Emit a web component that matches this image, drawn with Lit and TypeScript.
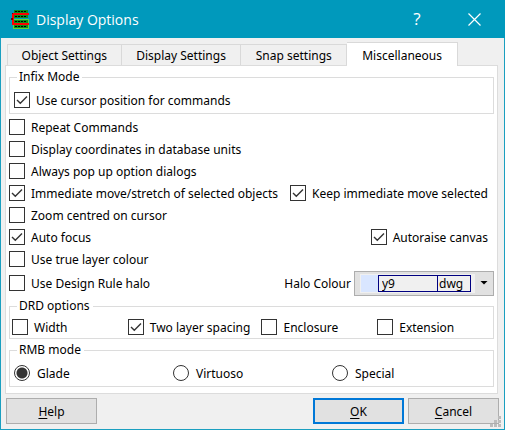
import { LitElement, html, css, svg } from "lit";
import { customElement, property, state } from "lit/decorators.js";
import { classMap } from "lit/directives/class-map.js";

const TABS = ["Object Settings", "Display Settings", "Snap settings", "Miscellaneous"];

const dots = (y: number) =>
  [4, 7, 10, 13].map((x) => svg`<rect x=${x} y=${y} width="2" height="1" fill="#000"/>`);

@customElement("check-option")
export class CheckOption extends LitElement {
  @property() label = "";
  @property({ type: Boolean }) checked = false;

  static styles = css`
    :host { display: block; }
    .option { display: flex; align-items: center; gap: 6px; height: 16px; white-space: nowrap; }
    .text { padding-top: 2px; }
    .box {
      appearance: none; flex: none; width: 16px; height: 16px; margin: 0;
      border: 1px solid #333; background: #fff;
    }
    .box:checked {
      background: #fff url("data:image/svg+xml,%3Csvg xmlns='http://www.w3.org/2000/svg' viewBox='0 0 14 14'%3E%3Cpath d='M2 7 L5.3 10.3 L12 3.6' fill='none' stroke='%23333' stroke-width='1.4'/%3E%3C/svg%3E") center / 14px 14px no-repeat;
    }
  `;

  render() {
    return html`<label class="option">
      <input class="box" type="checkbox" .checked=${this.checked} />
      <span class="text">${this.label}</span>
    </label>`;
  }
}

@customElement("app-root")
export class AppRoot extends LitElement {
  @state() private tab = 3;

  static styles = css`
    :host {
      display: block;
      font: 12px/16px "Noto Sans", sans-serif;
      color: #000;
    }
    * { box-sizing: border-box; }
    .window { background: #f0f0f0; border: 1px solid #1a9fc0; border-top: 0; }
    .titlebar {
      display: flex; align-items: center; height: 38px; padding: 0 18px 0 11px;
      margin: 0 -1px; background: #0099bc; color: #fff;
    }
    .logo { flex: none; width: 20px; height: 20px; }
    .title { flex: 1; margin: 0 0 0 5px; padding-top: 2px; font: 14px/24px "Open Sans", "Noto Sans", sans-serif; }
    .caption {
      width: 26px; height: 26px; margin-left: 31px; padding: 0; border: 0;
      background: none; color: #fff; font: 17px/24px "Open Sans", sans-serif;
      display: grid; place-items: center;
    }
    .tabs { display: flex; align-items: flex-end; height: 23px; margin-top: 4px; padding: 0 46px 0 6px; }
    .tab {
      flex: 114 1 0; height: 21px; padding: 2px 0 0; border: 1px solid #d9d9d9; border-width: 1px 1px 0 0;
      background: #f0f0f0; font: inherit; color: inherit; white-space: nowrap;
    }
    .tab:nth-child(1) { border-left-width: 1px; }
    .tab:nth-child(2) { flex-grow: 120; }
    .tab:nth-child(3) { flex-grow: 106; }
    .tab:nth-child(4) { flex-grow: 111; }
    .tab.active { height: 24px; margin-bottom: -1px; background: #fff; z-index: 1; }
    .panel { margin: 0 6px 0 4px; padding: 4px 3px 6px; background: #fff; border: 1px solid #dcdcdc; }
    .group { min-width: 0; margin: 0; border: 1px solid #dcdcdc; padding: 8px 4px 5px; }
    .legend { margin-left: 3px; padding: 0 3px 0 2px; line-height: 14px; }
    .rows { margin: 2px 0 3px; padding-right: 6px; }
    .row { display: flex; align-items: center; justify-content: space-between; height: 22px; }
    .row.tall { height: 26px; margin-right: -6px; }
    .drd { margin-bottom: 4px; padding: 6px 2px 3px; }
    .drd .legend { margin-left: 5px; }
    .drd-grid { display: grid; grid-template-columns: 116fr 134fr 116fr 114fr; }
    .drd-grid > * { min-width: 0; }
    .modes { display: grid; grid-template-columns: 159fr 159fr 157fr; }
    .mode { display: flex; align-items: center; gap: 7px; height: 16px; }
    .text { padding-top: 2px; }
    .radio {
      appearance: none; width: 16px; height: 16px; margin: 0;
      border: 1px solid #333; border-radius: 50%; background: #fff;
    }
    .radio:checked { background: radial-gradient(circle, #333 5px, #fff 6px); }
    .halo { display: flex; align-items: center; gap: 3px; }
    .combo {
      position: relative; display: flex; width: 140px; height: 25px;
      padding: 2px 5px; border: 1px solid #adadad; background: #e1e1e1;
    }
    .layer { display: flex; width: 115px; height: 19px; padding: 1px 4px 1px 1px; background: #f0f0f0; }
    .swatch { width: 17px; background: #d9e6ff; }
    .cells { display: flex; justify-content: flex-end; flex: 1; border: 1px solid #000080; }
    .purpose { width: 33px; padding-left: 1px; border-left: 1px solid #000080; line-height: 16px; }
    .pick {
      appearance: none; position: absolute; inset: 0; width: 100%; padding: 1px 0 0 27px;
      border: 0; background: none; font: inherit; color: inherit;
    }
    .arrow {
      position: absolute; right: 5px; top: 9px; width: 8px; height: 4px; pointer-events: none;
      background: #000; clip-path: polygon(0 0, 100% 0, 50% 100%);
    }
    .footer { position: relative; display: flex; gap: 4px; padding: 4px 5px 5px; }
    .btn {
      width: 91px; height: 26px; padding: 2px 0 0; border: 1px solid #adadad;
      background: #e1e1e1; font: inherit; color: inherit;
    }
    .btn.help { margin-right: auto; }
    .btn.primary { border: 2px solid #0078d7; }
    .key { text-decoration: underline; text-underline-offset: 2px; }
    .grip { position: absolute; right: 3px; bottom: 2px; width: 11px; height: 11px; }
  `;

  render() {
    return html`<main class="window">
      <header class="titlebar">
        <svg class="logo" viewBox="0 0 20 20" shape-rendering="crispEdges" aria-hidden="true">
          <rect x="3" y="1" width="14" height="8" fill="#0b8f1c" />
          <rect x="2" y="10" width="16" height="10" fill="#5fd23c" />
          <rect x="3" y="11" width="14" height="8" fill="#0b8f1c" />
          ${dots(2)}${dots(7)}${dots(12)}${dots(17)}
          <path d="M1 4h17v2h-15v8h15v2h-17z" fill="#f00" />
          <path d="M1 4h1v1h-1zM0 9h2v2h-2z" fill="#700" />
        </svg>
        <h1 class="title">Display Options</h1>
        <button class="caption" aria-label="What's this">?</button>
        <button class="caption" aria-label="Close">
          <svg width="13" height="13" viewBox="0 0 13 13" aria-hidden="true">
            <path d="M.5 .5l12 12M12.5 .5l-12 12" stroke="#fff" stroke-width="1.2" />
          </svg>
        </button>
      </header>
      <div class="tabs" role="tablist">
        ${TABS.map(
          (name, i) => html`<button
            role="tab"
            aria-selected=${i === this.tab}
            class=${classMap({ tab: true, active: i === this.tab })}
            @click=${() => (this.tab = i)}
          >${name}</button>`
        )}
      </div>
      <section class="panel">
        <fieldset class="group">
          <legend class="legend">Infix Mode</legend>
          <check-option label="Use cursor position for commands" checked></check-option>
        </fieldset>
        <div class="rows">
          <div class="row"><check-option label="Repeat Commands"></check-option></div>
          <div class="row"><check-option label="Display coordinates in database units"></check-option></div>
          <div class="row"><check-option label="Always pop up option dialogs"></check-option></div>
          <div class="row">
            <check-option label="Immediate move/stretch of selected objects" checked></check-option>
            <check-option label="Keep immediate move selected" checked></check-option>
          </div>
          <div class="row"><check-option label="Zoom centred on cursor"></check-option></div>
          <div class="row">
            <check-option label="Auto focus" checked></check-option>
            <check-option label="Autoraise canvas" checked></check-option>
          </div>
          <div class="row"><check-option label="Use true layer colour"></check-option></div>
          <div class="row tall">
            <check-option label="Use Design Rule halo"></check-option>
            <div class="halo">
              <label class="text" for="halo">Halo Colour</label>
              <div class="combo">
                <div class="layer">
                  <span class="swatch"></span>
                  <span class="cells"><span class="purpose">dwg</span></span>
                </div>
                <select class="pick" id="halo"><option>y9</option></select>
                <span class="arrow"></span>
              </div>
            </div>
          </div>
        </div>
        <fieldset class="group drd">
          <legend class="legend">DRD options</legend>
          <div class="drd-grid">
            <check-option label="Width"></check-option>
            <check-option label="Two layer spacing" checked></check-option>
            <check-option label="Enclosure"></check-option>
            <check-option label="Extension"></check-option>
          </div>
        </fieldset>
        <fieldset class="group">
          <legend class="legend">RMB mode</legend>
          <div class="modes">
            ${["Glade", "Virtuoso", "Special"].map(
              (m, i) => html`<label class="mode">
                <input class="radio" type="radio" name="rmb" .checked=${i === 0} />
                <span class="text">${m}</span>
              </label>`
            )}
          </div>
        </fieldset>
      </section>
      <footer class="footer">
        <button class="btn help"><span class="key">H</span>elp</button>
        <button class="btn primary"><span class="key">O</span>K</button>
        <button class="btn"><span class="key">C</span>ancel</button>
        <svg class="grip" viewBox="0 0 11 11" fill="#bcbcbc" aria-hidden="true">
          <path d="M8 0h3v3h-3zM4 4h3v3h-3zM8 4h3v3h-3zM0 8h3v3h-3zM4 8h3v3h-3zM8 8h3v3h-3z" />
        </svg>
      </footer>
    </main>`;
  }
}
